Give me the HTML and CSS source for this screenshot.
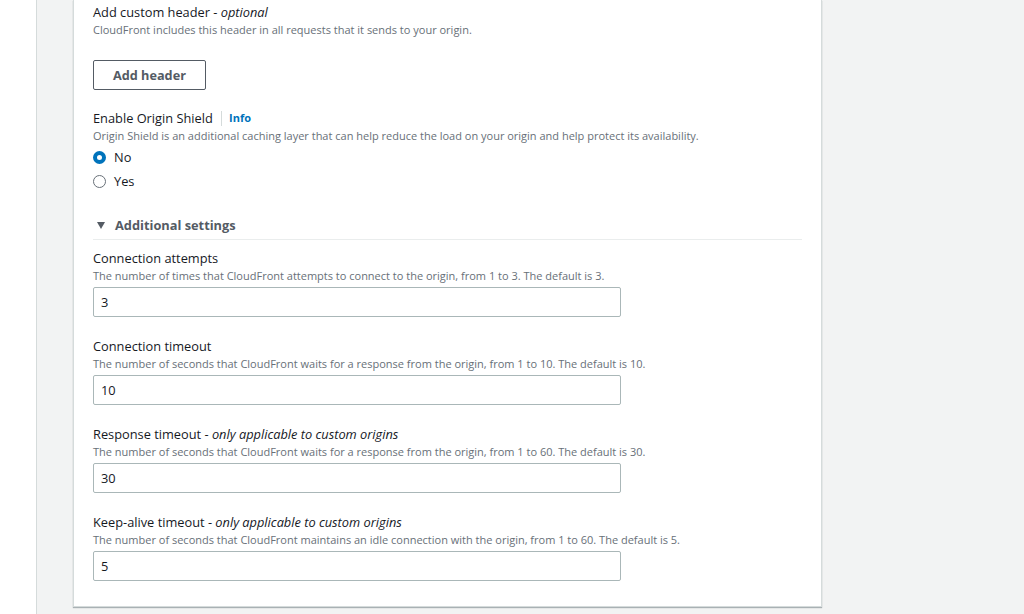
FILE: index.html
```html
<!DOCTYPE html>
<html lang="en">
<head>
<meta charset="utf-8">
<title>Origin settings</title>
<link rel="stylesheet" href="styles.css">
</head>
<body>
<div class="layout">
  <nav class="sidenav"></nav>
  <main class="content">
    <section class="card">
      <div class="field">
        <div class="label">Add custom header - <i>optional</i></div>
        <div class="desc">CloudFront includes this header in all requests that it sends to your origin.</div>
        <button class="btn" type="button">Add header</button>
      </div>

      <div class="field shield">
        <div class="label">Enable Origin Shield <span class="sep"></span><a class="info" href="#">Info</a></div>
        <div class="desc">Origin Shield is an additional caching layer that can help reduce the load on your origin and help protect its availability.</div>
        <div class="radios">
          <label class="radio"><span class="dot checked"></span>No</label>
          <label class="radio"><span class="dot"></span>Yes</label>
        </div>
      </div>

      <div class="expander">
        <div class="exp-head"><span class="caret"></span>Additional settings</div>
      </div>

      <div class="field input-field">
        <div class="label">Connection attempts</div>
        <div class="desc">The number of times that CloudFront attempts to connect to the origin, from 1 to 3. The default is 3.</div>
        <div class="input">3</div>
      </div>
      <div class="field input-field">
        <div class="label">Connection timeout</div>
        <div class="desc">The number of seconds that CloudFront waits for a response from the origin, from 1 to 10. The default is 10.</div>
        <div class="input">10</div>
      </div>
      <div class="field input-field">
        <div class="label">Response timeout - <i>only applicable to custom origins</i></div>
        <div class="desc">The number of seconds that CloudFront waits for a response from the origin, from 1 to 60. The default is 30.</div>
        <div class="input">30</div>
      </div>
      <div class="field input-field">
        <div class="label">Keep-alive timeout - <i>only applicable to custom origins</i></div>
        <div class="desc">The number of seconds that CloudFront maintains an idle connection with the origin, from 1 to 60. The default is 5.</div>
        <div class="input">5</div>
      </div>
    </section>
  </main>
</div>
</body>
</html>
```

FILE: styles.css
```css
* { box-sizing: border-box; }
html, body {
  margin: 0;
  padding: 0;
  background: #f2f3f3;
  font-family: "Open Sans", "Noto Sans", sans-serif;
  color: #16191f;
}
.layout {
  display: flex;
  min-height: 614px;
}
.sidenav {
  width: 37px;
  flex: none;
  background: #ffffff;
  border-right: 1px solid #d5dbdb;
}
.content {
  padding-left: 36px;
}
.card {
  width: 749px;
  background: #ffffff;
  border: 1px solid #d5dbdb;
  border-top: none;
  box-shadow: 0 1px 1px 0 rgba(0, 28, 36, 0.3);
  padding: 2px 19px 25px 19px;
}
.label {
  font-size: 12.8px;
  line-height: 20px;
  display: flex;
  align-items: center;
  white-space: pre;
}
.desc {
  font-size: 11px;
  line-height: 15px;
  color: #687078;
}
.btn {
  display: block;
  margin-top: 23px;
  height: 30px;
  padding: 0 19px;
  border: 1px solid #545b64;
  border-radius: 2px;
  background: #ffffff;
  color: #545b64;
  font-family: inherit;
  font-size: 12.7px;
  font-weight: 700;
}
.shield { margin-top: 18px; }
.sep {
  display: inline-block;
  width: 1px;
  height: 15px;
  background: #d5dbdb;
  margin: 0 7px 0 5px;
}
.info {
  color: #0073bb;
  font-size: 11px;
  font-weight: 700;
  text-decoration: none;
}
.radios {
  display: flex;
  flex-direction: column;
  gap: 4px;
  margin-top: 4px;
}
.radio {
  display: flex;
  align-items: center;
  font-size: 12.8px;
  line-height: 20px;
  gap: 8px;
}
.dot {
  width: 13px;
  height: 13px;
  border-radius: 50%;
  border: 1px solid #687078;
  background: #ffffff;
}
.dot.checked {
  border: 4px solid #0073bb;
}
.expander {
  margin-top: 24px;
  border-bottom: 1px solid #eaeded;
  padding-bottom: 4px;
}
.exp-head {
  display: flex;
  align-items: center;
  font-size: 12.8px;
  font-weight: 700;
  line-height: 20px;
  color: #545b64;
}
.caret {
  width: 0;
  height: 0;
  margin: 0 10px 0 4px;
  border-left: 4px solid transparent;
  border-right: 4px solid transparent;
  border-top: 7px solid #545b64;
}
.expander + .input-field { margin-top: 8px; }
.input-field + .input-field { margin-top: 19px; }
.input {
  margin-top: 4px;
  width: 528px;
  height: 30px;
  border: 1px solid #aab7b8;
  border-radius: 2px;
  padding: 0 7px;
  font-size: 12.8px;
  line-height: 28px;
}
```
